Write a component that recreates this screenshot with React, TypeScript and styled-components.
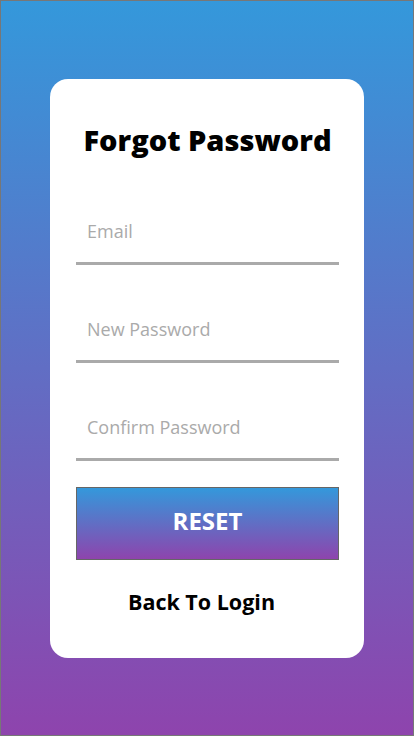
import React from "react";
import styled, { createGlobalStyle } from "styled-components";

const Global = createGlobalStyle`
  html, body { margin: 0; padding: 0; }
  body { font-family: "Open Sans", "Noto Sans", Arial, sans-serif; }
  * { box-sizing: border-box; }
`;

const Page = styled.div`
  width: 414px;
  height: 736px;
  border: 1px solid #777;
  background: linear-gradient(to bottom, #3498db, #8e44ad);
  display: flex;
  justify-content: center;
  padding-top: 78px;
`;

const Card = styled.form`
  width: 314px;
  height: 579px;
  background: #fff;
  border-radius: 18px;
  padding: 43px 25px 0 26px;
  display: flex;
  flex-direction: column;
  align-items: stretch;
`;

const Title = styled.h1`
  margin: 0 0 44px;
  font-size: 29px;
  line-height: 36px;
  font-weight: 800;
  text-align: center;
  color: #000;
`;

const Field = styled.input`
  height: 63px;
  border: none;
  border-bottom: 3px solid #aaa;
  outline: none;
  padding: 0 11px 2px;
  font-family: inherit;
  font-size: 18px;
  color: #333;
  margin-bottom: 35px;
  background: transparent;
  &::placeholder { color: #aaa; }
  &:last-of-type { margin-bottom: 26px; }
`;

const ResetButton = styled.button`
  height: 73px;
  border: 1px solid #666;
  background: linear-gradient(to bottom, #3498db, #8e44ad);
  color: #fff;
  font-family: inherit;
  font-size: 24px;
  font-weight: 700;
  line-height: 30px;
  padding: 0 0 6px;
  cursor: pointer;
`;

const BackLink = styled.a`
  margin-top: 29px;
  font-size: 21.5px;
  line-height: 26px;
  font-weight: 700;
  color: #000;
  text-align: center;
  text-decoration: none;
  padding-right: 12px;
`;

export default function App() {
  return (
    <>
      <Global />
      <Page>
        <Card onSubmit={(e) => e.preventDefault()}>
          <Title>Forgot Password</Title>
          <Field type="email" placeholder="Email" />
          <Field type="password" placeholder="New Password" />
          <Field type="password" placeholder="Confirm Password" />
          <ResetButton type="submit">RESET</ResetButton>
          <BackLink href="#">Back To Login</BackLink>
        </Card>
      </Page>
    </>
  );
}
